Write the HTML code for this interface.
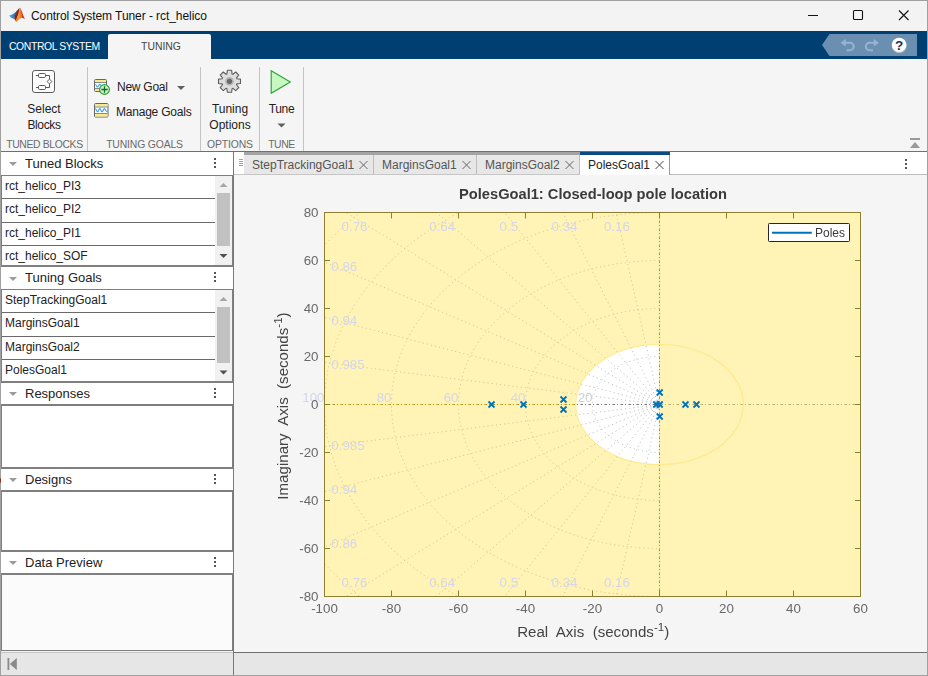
<!DOCTYPE html>
<html lang="en">
<head>
<meta charset="utf-8">
<title>Control System Tuner - rct_helico</title>
<style>
*{box-sizing:border-box;margin:0;padding:0}
html,body{width:928px;height:676px;overflow:hidden;background:#f5f5f5}
body{position:relative;font-family:"Liberation Sans",sans-serif;font-size:12px;color:#222}
.abs{position:absolute}
#win{position:absolute;left:0;top:0;width:928px;height:676px;border:1px solid #a0a0a0}
#titlebar{position:absolute;left:1px;top:1px;width:926px;height:30px;background:#f3f3f3}
#title{position:absolute;left:31px;top:8px;font-size:12px;line-height:16px;color:#111;white-space:nowrap;letter-spacing:-0.07px}
#bluebar{position:absolute;left:1px;top:31px;width:926px;height:28px;background:#003f72}
#tab-cs{position:absolute;left:9px;top:40px;font-size:10.4px;line-height:14px;color:#fff;white-space:nowrap;letter-spacing:-0.38px}
#tab-tuning{position:absolute;left:108px;top:34px;width:103px;height:25px;background:#f5f5f5;border-radius:2px 2px 0 0;color:#444;font-size:10.4px;line-height:14px;text-align:center;padding:6px 0 0 3px;letter-spacing:0}
#strip{position:absolute;left:1px;top:59px;width:926px;height:92px;background:#f5f5f5}
.vsep{position:absolute;top:67px;width:1px;height:84px;background:#c4c4c4}
.sect{position:absolute;top:138px;font-size:10.4px;line-height:13px;color:#6b6b6b;white-space:nowrap;text-align:center}
.tl{position:absolute;font-size:12px;line-height:16px;color:#222;white-space:nowrap;text-align:center}
.hline{position:absolute;height:1px}
.phead{position:absolute;left:1px;width:232px;background:#fff;font-size:13px;line-height:15px;color:#222;white-space:nowrap}
.phead span{position:absolute;left:24px}
.phead i.tri{position:absolute;left:8px;width:0;height:0;border-left:4px solid transparent;border-right:4px solid transparent;border-top:4px solid #9b9b9b}
.phead i.dots{position:absolute;left:213px;width:2px;height:2px;background:#555;box-shadow:0 4px 0 #555,0 8px 0 #555}
.pbox{position:absolute;left:1px;width:232px;background:#fff;border:2px solid #7f7f7f;border-right-width:1px;border-left-width:1px}
.item{position:absolute;left:3px;width:212px;font-size:12px;line-height:14px;color:#222;white-space:nowrap;padding-left:2px}
.isep{position:absolute;left:2px;width:213px;height:1px;background:#6a6a6a}
.sbar{position:absolute;left:215px;width:17px;background:#f1f1f1}
.sthumb{position:absolute;left:217px;width:13px;background:#c1c1c1}
.dtab{position:absolute;top:155px;height:19px;background:#e7e7e7;font-size:12px;line-height:14px;color:#555;white-space:nowrap;padding:3px 0 0 8px;border-right:1px solid #bdbdbd}
svg.plot{position:absolute;left:0;top:0;will-change:transform}
</style>
</head>
<body>
<div id="titlebar"></div>
<div id="title">Control System Tuner - rct_helico</div>
<svg class="abs" style="left:0;top:0" width="928" height="32" viewBox="0 0 928 32">
  <!-- matlab logo -->
  <defs>
    <linearGradient id="lgb" x1="0" y1="0" x2="1" y2="0"><stop offset="0" stop-color="#4fa8e8"/><stop offset="0.5" stop-color="#2f80c8"/><stop offset="0.8" stop-color="#1b4f92"/><stop offset="1" stop-color="#16305c"/></linearGradient>
    <linearGradient id="lgo" x1="0" y1="0" x2="1" y2="0"><stop offset="0" stop-color="#e8701c"/><stop offset="0.5" stop-color="#f6a032"/><stop offset="1" stop-color="#e25a1a"/></linearGradient>
  </defs>
  <path d="M9.200 15.400 Q14.200 14.400 18.300 9.200 L18.800 10.500 L15.200 15.200 L14.400 18.900 L11 17.700 Z" fill="url(#lgb)"/>
  <path d="M18.300 9.200 L19.300 7.900 L19.600 9.500 L18.600 14 L15.900 21.300 L14.300 18.800 L14.900 15.300 Z" fill="#8e2418"/>
  <path d="M19.300 7.900 L20.100 7.800 L21 11.500 L21.900 17.700 C20.300 17.600 18.600 20.200 16.200 22 L15.600 20.600 L18.400 14 Z" fill="url(#lgo)"/>
  <path d="M20.100 7.800 C21.300 9.500 22.800 14.500 25 19.200 C23.800 18.500 22.800 17.700 21.900 17.700 L21 11.500 Z" fill="#c23a1c"/>
  <!-- window controls -->
  <path d="M808 15.5 H818" stroke="#111" stroke-width="1" fill="none"/>
  <rect x="853.5" y="10.5" width="9" height="9" rx="1" stroke="#111" stroke-width="1.1" fill="none"/>
  <path d="M899 10.500 L908.500 20 M908.500 10.500 L899 20" stroke="#111" stroke-width="1.1" fill="none"/>
</svg>
<div id="bluebar"></div>
<div id="tab-cs">CONTROL SYSTEM</div>
<div id="tab-tuning">TUNING</div>
<!-- quick access bar -->
<svg class="abs" style="left:800px;top:31px" width="128" height="28" viewBox="800 31 128 28">
  <path d="M822 45 L829.5 34 H917 V56 H829.5 Z" fill="#6b8fb1"/>
  <g transform="translate(0 1.3)">
  <g fill="none" stroke="#93b4d3" stroke-width="2.1" stroke-linecap="butt">
    <path d="M845 41.5 H850 A3.7 3.7 0 0 1 850 48.9 H846.5"/>
    <path d="M874.5 41.5 H869.5 A3.7 3.7 0 0 0 869.5 48.9 H873"/>
  </g>
  <path d="M840.5 41.5 L845.8 37.8 V45.2 Z" fill="#93b4d3"/>
  <path d="M879 41.5 L873.7 37.8 V45.2 Z" fill="#93b4d3"/>
  </g>
  <circle cx="899.2" cy="45.6" r="7.6" fill="#aeb9c4"/>
  <circle cx="899.1" cy="44.9" r="7.2" fill="#ffffff"/>
  <text x="899.2" y="50" text-anchor="middle" font-family="'Liberation Sans',sans-serif" font-weight="bold" font-size="13.5px" fill="#1c2f4a">?</text>
</svg>
<div id="strip"></div>
<div class="vsep" style="left:87px"></div>
<div class="vsep" style="left:200px"></div>
<div class="vsep" style="left:259px"></div>
<div class="vsep" style="left:303px"></div>
<!-- toolstrip icons -->
<svg class="abs" style="left:0;top:59px" width="928" height="92" viewBox="0 59 928 92">
  <!-- select blocks -->
  <rect x="32.5" y="70.5" width="22" height="22" rx="2.400" fill="#fdfdfd" stroke="#5a5a5a" stroke-width="1"/>
  <g fill="#fff" stroke="#5a5a5a" stroke-width="1">
    <rect x="38.5" y="73.5" width="7" height="4" rx="1.200"/>
    <rect x="38.5" y="85.500" width="7" height="4" rx="1.200"/>
    <path d="M36 75.500 H38.500 M36 87.500 H38.500 M45.500 75.500 H49.500 V79 M45.500 87.500 H49.500 V84" fill="none"/>
    <path d="M49.500 79.100 L51.900 81.500 L49.500 83.900 L47.100 81.500 Z" stroke-linejoin="round"/>
  </g>
  <!-- new goal -->
  <rect x="94.500" y="79.500" width="12" height="12" rx="1" fill="#fff" stroke="#666" stroke-width="1"/>
  <rect x="95" y="80" width="11" height="2.300" fill="#f8e98e"/>
  <rect x="95" y="88.700" width="11" height="2.300" fill="#f8e98e"/>
  <path d="M95 82.500 H106 M95 88.500 H106" stroke="#7a7a7a" stroke-width="0.900" fill="none"/>
  <path d="M95.300 84.300 C96.300 84.300 96.600 87 97.600 87 C98.600 87 98.900 84 99.900 84 C100.900 84 101.200 87 102.200 87" fill="none" stroke="#3c9be8" stroke-width="1.100"/>
  <circle cx="104.500" cy="89.500" r="4.900" fill="#cdf2cb" stroke="#2c9c38" stroke-width="1.100"/>
  <path d="M101.300 89.500 H107.700 M104.500 86.300 V92.700" stroke="#166a22" stroke-width="1.300" fill="none"/>
  <path d="M177 86 H185 L181 90 Z" fill="#5f5f5f"/>
  <!-- manage goals -->
  <rect x="94.500" y="103.500" width="13.500" height="13.500" rx="1" fill="#fff" stroke="#666" stroke-width="1"/>
  <rect x="95" y="104" width="12.500" height="2.600" fill="#f8e98e"/>
  <rect x="95" y="114" width="12.500" height="2.500" fill="#f8e98e"/>
  <path d="M95 107 H107.500 M95 113.500 H107.500" stroke="#7a7a7a" stroke-width="0.900" fill="none"/>
  <path d="M95.300 108.600 C96.200 108.600 96.500 111.800 97.500 111.800 C98.500 111.800 98.800 108.600 99.800 108.600 C100.800 108.600 101.100 111.800 102.100 111.800 C103.100 111.800 103.400 108.600 104.400 108.600 C105.400 108.600 105.800 111.800 107.300 111.800" fill="none" stroke="#3c9be8" stroke-width="1.100"/>
  <!-- gear -->
  <g transform="translate(229.500 81.300)">
    <path d="M-2.53 -7.38 L-2.17 -10.99 L2.17 -10.99 L2.53 -7.38 L3.43 -7.01 L6.23 -9.30 L9.30 -6.23 L7.01 -3.43 L7.38 -2.53 L10.99 -2.17 L10.99 2.17 L7.38 2.53 L7.01 3.43 L9.30 6.23 L6.23 9.30 L3.43 7.01 L2.53 7.38 L2.17 10.99 L-2.17 10.99 L-2.53 7.38 L-3.43 7.01 L-6.23 9.30 L-9.30 6.23 L-7.01 3.43 L-7.38 2.53 L-10.99 2.17 L-10.99 -2.17 L-7.38 -2.53 L-7.01 -3.43 L-9.30 -6.23 L-6.23 -9.30 L-3.43 -7.01 Z" fill="#dedede" stroke="#5e5e5e" stroke-width="1.100" stroke-linejoin="round"/>
    <circle r="4.300" fill="#b4b4b4"/>
    <circle r="2.600" fill="#686868"/>
  </g>
  <!-- play -->
  <path d="M271.200 70.800 L290.300 82 L271.200 93.200 Z" fill="#c8f7c1" stroke="#22a531" stroke-width="1.100" stroke-linejoin="miter"/>
  <path d="M277.500 123.500 H285.500 L281.500 127.500 Z" fill="#5f5f5f"/>
  <!-- collapse -->
  <rect x="910" y="138" width="10" height="2" fill="#9a9a9a"/>
  <path d="M910 148 L915 142 L920 148 Z" fill="#9a9a9a"/>
</svg>
<div class="tl" style="left:14px;top:101px;width:60px">Select<br><span style="letter-spacing:-0.35px">Blocks</span></div>
<div class="tl" style="left:117px;top:79px;text-align:left;letter-spacing:-0.25px">New Goal</div>
<div class="tl" style="left:116px;top:104px;text-align:left;letter-spacing:-0.22px">Manage Goals</div>
<div class="tl" style="left:200px;top:101px;width:60px">Tuning<br>Options</div>
<div class="tl" style="left:260px;top:101px;width:43px;letter-spacing:-0.3px">Tune</div>
<div class="sect" style="left:1px;width:87px;letter-spacing:-0.36px">TUNED BLOCKS</div>
<div class="sect" style="left:89px;width:111px;letter-spacing:-0.16px">TUNING GOALS</div>
<div class="sect" style="left:201px;width:58px;letter-spacing:-0.14px">OPTIONS</div>
<div class="sect" style="left:260px;width:43px;letter-spacing:-0.4px">TUNE</div>
<div class="hline" style="left:1px;top:151px;width:926px;background:#707070"></div>

<!-- left panel -->
<div class="abs" style="left:1px;top:152px;width:232px;height:500px;background:#fff"></div>
<div class="abs" style="left:233px;top:152px;width:1px;height:523px;background:#787878"></div>
<div class="phead" style="top:152px;height:23px"><i class="tri" style="top:10px"></i><span style="top:4px">Tuned Blocks</span><i class="dots" style="top:6px"></i></div>
<div class="pbox" style="top:175px;height:92px;border-top-width:1px"></div>
<div class="item" style="top:179px">rct_helico_PI3</div><div class="isep" style="top:198px"></div>
<div class="item" style="top:202px">rct_helico_PI2</div><div class="isep" style="top:222px"></div>
<div class="item" style="top:226px">rct_helico_PI1</div><div class="isep" style="top:245px"></div>
<div class="item" style="top:249px">rct_helico_SOF</div>
<div class="sbar" style="top:176px;height:89px"></div><div class="sthumb" style="top:193px;height:53px"></div>
<svg class="abs" style="left:215px;top:176px" width="17" height="89" viewBox="0 0 17 89"><path d="M4.500 11 L8.500 7 L12.500 11 Z" fill="#a6a6a6"/><path d="M4.500 78 L8.500 82 L12.500 78 Z" fill="#505050"/></svg>

<div class="phead" style="top:267px;height:22px"><i class="tri" style="top:10px"></i><span style="top:3px">Tuning Goals</span><i class="dots" style="top:5px"></i></div>
<div class="pbox" style="top:289px;height:94px;border-top-width:1px"></div>
<div class="item" style="top:293px">StepTrackingGoal1</div><div class="isep" style="top:312px"></div>
<div class="item" style="top:316px">MarginsGoal1</div><div class="isep" style="top:336px"></div>
<div class="item" style="top:340px">MarginsGoal2</div><div class="isep" style="top:359px"></div>
<div class="item" style="top:363px">PolesGoal1</div>
<div class="sbar" style="top:290px;height:91px"></div><div class="sthumb" style="top:307px;height:56px"></div>
<svg class="abs" style="left:215px;top:290px" width="17" height="91" viewBox="0 0 17 91"><path d="M4.500 11 L8.500 7 L12.500 11 Z" fill="#a6a6a6"/><path d="M4.500 80.500 L8.500 84.500 L12.500 80.500 Z" fill="#505050"/></svg>

<div class="phead" style="top:383px;height:21px"><i class="tri" style="top:9px"></i><span style="top:3px">Responses</span><i class="dots" style="top:5px"></i></div>
<div class="pbox" style="top:404px;height:65px"></div>
<div class="phead" style="top:469px;height:21px"><i class="tri" style="top:9px"></i><span style="top:3px">Designs</span><i class="dots" style="top:5px"></i></div>
<div class="pbox" style="top:490px;height:62px"></div>
<div class="phead" style="top:552px;height:21px"><i class="tri" style="top:9px"></i><span style="top:3px">Data Preview</span><i class="dots" style="top:5px"></i></div>
<div class="pbox" style="top:573px;height:78px;background:#fbfbfb;border-bottom-width:1px"></div>

<!-- status bar -->
<div class="abs" style="left:1px;top:651px;width:232px;height:1px;background:#f4f4f4"></div>
<div class="abs" style="left:1px;top:652px;width:232px;height:1px;background:#c6c6c6"></div>
<div class="abs" style="left:1px;top:653px;width:232px;height:22px;background:#e6e6e6"></div>
<div class="abs" style="left:234px;top:652px;width:693px;height:1px;background:#707070"></div>
<div class="abs" style="left:234px;top:653px;width:693px;height:22px;background:#e6e6e6"></div>
<svg class="abs" style="left:0;top:652px" width="30" height="23" viewBox="0 652 30 23"><rect x="7.500" y="658" width="1.800" height="12" fill="#8a8a8a"/><path d="M9.800 664 L16.800 658 V670 Z" fill="#8a8a8a"/></svg>

<!-- document tabs -->
<div class="abs" style="left:234px;top:152px;width:693px;height:22px;background:#fff"></div>
<div class="abs" style="left:244px;top:152px;width:336px;height:3px;background:#a3a3a3"></div>
<div class="abs" style="left:580px;top:152px;width:90px;height:3px;background:#0c4a86"></div>
<div class="dtab" style="left:244px;width:130px">StepTrackingGoal1</div>
<div class="dtab" style="left:374px;width:103px">MarginsGoal1</div>
<div class="dtab" style="left:477px;width:103px">MarginsGoal2</div>
<div class="dtab" style="left:580px;width:90px;background:#fff;color:#222;border-right-color:#9a9a9a;height:20px">PolesGoal1</div>
<div class="hline" style="left:234px;top:174px;width:346px;background:#c6c6c6"></div>
<div class="hline" style="left:670px;top:174px;width:257px;background:#bdbdbd"></div>
<svg class="abs" style="left:234px;top:152px" width="693" height="23" viewBox="234 152 693 23">
  <g stroke="#a2a2a2" stroke-width="1" fill="none">
    <path d="M239 159.500 H243 M239 161.500 H243 M239 163.500 H243 M239 165.500 H243"/>
  </g>
  <g stroke="#666" stroke-width="1" fill="none">
    <path d="M359.500 161 L367.500 169 M367.500 161 L359.500 169"/>
    <path d="M462.500 161 L470.500 169 M470.500 161 L462.500 169"/>
    <path d="M565.500 161 L573.500 169 M573.500 161 L565.500 169"/>
    <path d="M655.500 161 L663.500 169 M663.500 161 L655.500 169" stroke="#444"/>
  </g>
  <g fill="#555"><rect x="905" y="159" width="2" height="2"/><rect x="905" y="163" width="2" height="2"/><rect x="905" y="167" width="2" height="2"/></g>
</svg>

<svg class="plot" width="928" height="676" viewBox="0 0 928 676" font-family="'Liberation Sans', sans-serif">
<defs><clipPath id="ax"><rect x="324.5" y="212.5" width="536.0" height="384.0"/></clipPath></defs>
<rect x="324.5" y="212.5" width="536.0" height="384.0" fill="#ffffff"/>
<defs><clipPath id="yel"><path clip-rule="evenodd" d="M324.5 212.5 H659.5 V596.5 H324.5 Z M659 344.5 A83.75 60 0 0 0 659 464.5 Z"/></clipPath></defs>
<g clip-path="url(#ax)" fill="none" stroke="#c2c2c2" stroke-width="1" stroke-dasharray="1.2 3"><line x1="659.5" y1="404.5" x2="584.46" y2="72.83"/><line x1="659.5" y1="404.5" x2="584.46" y2="736.17"/><line x1="659.5" y1="404.5" x2="500.04" y2="88.52"/><line x1="659.5" y1="404.5" x2="500.04" y2="720.48"/><line x1="659.5" y1="404.5" x2="425" y2="113.52"/><line x1="659.5" y1="404.5" x2="425" y2="695.48"/><line x1="659.5" y1="404.5" x2="359.34" y2="146.33"/><line x1="659.5" y1="404.5" x2="359.34" y2="662.67"/><line x1="659.5" y1="404.5" x2="303.06" y2="186.13"/><line x1="659.5" y1="404.5" x2="303.06" y2="622.87"/><line x1="659.5" y1="404.5" x2="256.16" y2="233.04"/><line x1="659.5" y1="404.5" x2="256.16" y2="575.96"/><line x1="659.5" y1="404.5" x2="218.64" y2="289.87"/><line x1="659.5" y1="404.5" x2="218.64" y2="519.13"/><line x1="659.5" y1="404.5" x2="197.53" y2="346.52"/><line x1="659.5" y1="404.5" x2="197.53" y2="462.48"/><path d="M659.5 356.5 A67 48 0 0 0 659.5 452.5"/><path d="M659.5 308.5 A134 96 0 0 0 659.5 500.5"/><path d="M659.5 260.5 A201 144 0 0 0 659.5 548.5"/><path d="M659.5 212.5 A268 192 0 0 0 659.5 596.5"/><path d="M659.5 164.5 A335 240 0 0 0 659.5 644.5"/><path d="M659.5 116.5 A402 288 0 0 0 659.5 692.5"/></g>
<g stroke="#767676" stroke-width="1" stroke-dasharray="2.5 2 1 2.5" fill="none">
<line x1="324.5" y1="404.5" x2="860.5" y2="404.5"/>
<line x1="659.5" y1="212.5" x2="659.5" y2="596.5"/>
</g>
<path fill-rule="evenodd" fill="#ffe76d" fill-opacity="0.5" d="M324.5 212.5 H860.5 V596.5 H324.5 Z M659 344.5 A83.75 60 0 0 0 659 464.5 Z"/>
<g stroke="#ffe680" stroke-width="1.2" fill="none" stroke-opacity="0.8">
<ellipse cx="659.5" cy="404.5" rx="83.75" ry="60"/>
<line x1="324.5" y1="404.5" x2="575.75" y2="404.5"/>
<line x1="659.5" y1="212.5" x2="659.5" y2="596.5"/>
</g>
<g clip-path="url(#yel)" fill="none" stroke="#8a8460" stroke-opacity="0.1" stroke-width="1" stroke-dasharray="1.2 3"><line x1="659.5" y1="404.5" x2="584.46" y2="72.83"/><line x1="659.5" y1="404.5" x2="584.46" y2="736.17"/><line x1="659.5" y1="404.5" x2="500.04" y2="88.52"/><line x1="659.5" y1="404.5" x2="500.04" y2="720.48"/><line x1="659.5" y1="404.5" x2="425" y2="113.52"/><line x1="659.5" y1="404.5" x2="425" y2="695.48"/><line x1="659.5" y1="404.5" x2="359.34" y2="146.33"/><line x1="659.5" y1="404.5" x2="359.34" y2="662.67"/><line x1="659.5" y1="404.5" x2="303.06" y2="186.13"/><line x1="659.5" y1="404.5" x2="303.06" y2="622.87"/><line x1="659.5" y1="404.5" x2="256.16" y2="233.04"/><line x1="659.5" y1="404.5" x2="256.16" y2="575.96"/><line x1="659.5" y1="404.5" x2="218.64" y2="289.87"/><line x1="659.5" y1="404.5" x2="218.64" y2="519.13"/><line x1="659.5" y1="404.5" x2="197.53" y2="346.52"/><line x1="659.5" y1="404.5" x2="197.53" y2="462.48"/><path d="M659.5 356.5 A67 48 0 0 0 659.5 452.5"/><path d="M659.5 308.5 A134 96 0 0 0 659.5 500.5"/><path d="M659.5 260.5 A201 144 0 0 0 659.5 548.5"/><path d="M659.5 212.5 A268 192 0 0 0 659.5 596.5"/><path d="M659.5 164.5 A335 240 0 0 0 659.5 644.5"/><path d="M659.5 116.5 A402 288 0 0 0 659.5 692.5"/></g>
<g stroke="#7a6600" stroke-opacity="0.55" stroke-width="1" stroke-dasharray="2.5 2 1 2.5" fill="none">
<line x1="324.5" y1="404.5" x2="575.75" y2="404.5"/>
<line x1="659.5" y1="212.5" x2="659.5" y2="596.5"/>
</g>
<g fill="#d4d7ea" font-size="13.33px">
<text x="341.6" y="231">0.76</text>
<text x="341.6" y="587.3">0.76</text>
<text x="429.2" y="231">0.64</text>
<text x="429.2" y="587.3">0.64</text>
<text x="499.6" y="231">0.5</text>
<text x="499.6" y="587.3">0.5</text>
<text x="551.6" y="231">0.34</text>
<text x="551.6" y="587.3">0.34</text>
<text x="603.9" y="231">0.16</text>
<text x="603.9" y="587.3">0.16</text>
<text x="331.3" y="271">0.86</text>
<text x="331.3" y="547.5">0.86</text>
<text x="331.3" y="324.8">0.94</text>
<text x="331.3" y="493.7">0.94</text>
<text x="331.3" y="368.5">0.985</text>
<text x="331.3" y="450">0.985</text>
<text x="592.5" y="402" text-anchor="end" fill="#cfcfcf">20</text>
<text x="525.5" y="402" text-anchor="end">40</text>
<text x="458.5" y="402" text-anchor="end">60</text>
<text x="391.5" y="402" text-anchor="end">80</text>
<text x="324.5" y="402" text-anchor="end">100</text>
</g>
<g stroke="#8e7f2f" stroke-width="1" fill="none">
<rect x="324.5" y="212.5" width="536.0" height="384.0"/>
<line x1="391.5" y1="212.5" x2="391.5" y2="218.5"/><line x1="391.5" y1="596.5" x2="391.5" y2="590.5"/>
<line x1="458.5" y1="212.5" x2="458.5" y2="218.5"/><line x1="458.5" y1="596.5" x2="458.5" y2="590.5"/>
<line x1="525.5" y1="212.5" x2="525.5" y2="218.5"/><line x1="525.5" y1="596.5" x2="525.5" y2="590.5"/>
<line x1="592.5" y1="212.5" x2="592.5" y2="218.5"/><line x1="592.5" y1="596.5" x2="592.5" y2="590.5"/>
<line x1="659.5" y1="212.5" x2="659.5" y2="218.5"/><line x1="659.5" y1="596.5" x2="659.5" y2="590.5"/>
<line x1="726.5" y1="212.5" x2="726.5" y2="218.5"/><line x1="726.5" y1="596.5" x2="726.5" y2="590.5"/>
<line x1="793.5" y1="212.5" x2="793.5" y2="218.5"/><line x1="793.5" y1="596.5" x2="793.5" y2="590.5"/>
<line x1="324.5" y1="548.5" x2="330.0" y2="548.5"/><line x1="860.5" y1="548.5" x2="855.0" y2="548.5"/>
<line x1="324.5" y1="500.5" x2="330.0" y2="500.5"/><line x1="860.5" y1="500.5" x2="855.0" y2="500.5"/>
<line x1="324.5" y1="452.5" x2="330.0" y2="452.5"/><line x1="860.5" y1="452.5" x2="855.0" y2="452.5"/>
<line x1="324.5" y1="404.5" x2="330.0" y2="404.5"/><line x1="860.5" y1="404.5" x2="855.0" y2="404.5"/>
<line x1="324.5" y1="356.5" x2="330.0" y2="356.5"/><line x1="860.5" y1="356.5" x2="855.0" y2="356.5"/>
<line x1="324.5" y1="308.5" x2="330.0" y2="308.5"/><line x1="860.5" y1="308.5" x2="855.0" y2="308.5"/>
<line x1="324.5" y1="260.5" x2="330.0" y2="260.5"/><line x1="860.5" y1="260.5" x2="855.0" y2="260.5"/>
</g>
<g stroke="#0072bd" stroke-width="1.8" fill="none">
<path d="M488.5 401.5L494.5 407.5M488.5 407.5L494.5 401.5"/>
<path d="M520.5 401.5L526.5 407.5M520.5 407.5L526.5 401.5"/>
<path d="M560.5 396.5L566.5 402.5M560.5 402.5L566.5 396.5"/>
<path d="M560.5 406.5L566.5 412.5M560.5 412.5L566.5 406.5"/>
<path d="M653.3 401.5L659.3 407.5M653.3 407.5L659.3 401.5"/>
<path d="M656.7 401.5L662.7 407.5M656.7 407.5L662.7 401.5"/>
<path d="M656.7 389.5L662.7 395.5M656.7 395.5L662.7 389.5"/>
<path d="M656.7 413.5L662.7 419.5M656.7 419.5L662.7 413.5"/>
<path d="M682.5 401.5L688.5 407.5M682.5 407.5L688.5 401.5"/>
<path d="M693.5 401.5L699.5 407.5M693.5 407.5L699.5 401.5"/>
</g>
<g fill="#686868" font-size="13.33px">
<text x="318.5" y="601.4" text-anchor="end">-80</text>
<text x="318.5" y="553.4" text-anchor="end">-60</text>
<text x="318.5" y="505.4" text-anchor="end">-40</text>
<text x="318.5" y="457.4" text-anchor="end">-20</text>
<text x="318.5" y="409.4" text-anchor="end">0</text>
<text x="318.5" y="361.4" text-anchor="end">20</text>
<text x="318.5" y="313.4" text-anchor="end">40</text>
<text x="318.5" y="265.4" text-anchor="end">60</text>
<text x="318.5" y="217.4" text-anchor="end">80</text>
<text x="324.5" y="613" text-anchor="middle">-100</text>
<text x="391.5" y="613" text-anchor="middle">-80</text>
<text x="458.5" y="613" text-anchor="middle">-60</text>
<text x="525.5" y="613" text-anchor="middle">-40</text>
<text x="592.5" y="613" text-anchor="middle">-20</text>
<text x="659.5" y="613" text-anchor="middle">0</text>
<text x="726.5" y="613" text-anchor="middle">20</text>
<text x="793.5" y="613" text-anchor="middle">40</text>
<text x="860.5" y="613" text-anchor="middle">60</text>
</g>
<text x="593" y="199" text-anchor="middle" font-size="14.67px" font-weight="bold" fill="#3a3a3a">PolesGoal1: Closed-loop pole location</text>
<text x="593.2" y="637" text-anchor="middle" font-size="15.1px" fill="#444444" xml:space="preserve">Real  Axis  (seconds<tspan dy="-6" font-size="11.6px">-1</tspan><tspan dy="6">)</tspan></text>
<text transform="translate(288,406) rotate(-90)" text-anchor="middle" font-size="15.1px" fill="#444444" xml:space="preserve">Imaginary  Axis  (seconds<tspan dy="-6" font-size="11.6px">-1</tspan><tspan dy="6">)</tspan></text>
<rect x="768.5" y="223.5" width="81" height="18" rx="0.8" fill="#ffffff" stroke="#262626" stroke-width="1"/>
<line x1="772" y1="232.8" x2="811.8" y2="232.8" stroke="#0072bd" stroke-width="2"/>
<text x="815" y="237" font-size="12px" fill="#3a3a3a">Poles</text>
</svg>
<div id="win"></div>
<div class="abs" style="left:0;top:478px;width:1px;height:5px;background:linear-gradient(#b5a024,#7d1f55 25%,#a3242e 60%,#8a2a40 78%,#b5a024)"></div>
</body>
</html>
